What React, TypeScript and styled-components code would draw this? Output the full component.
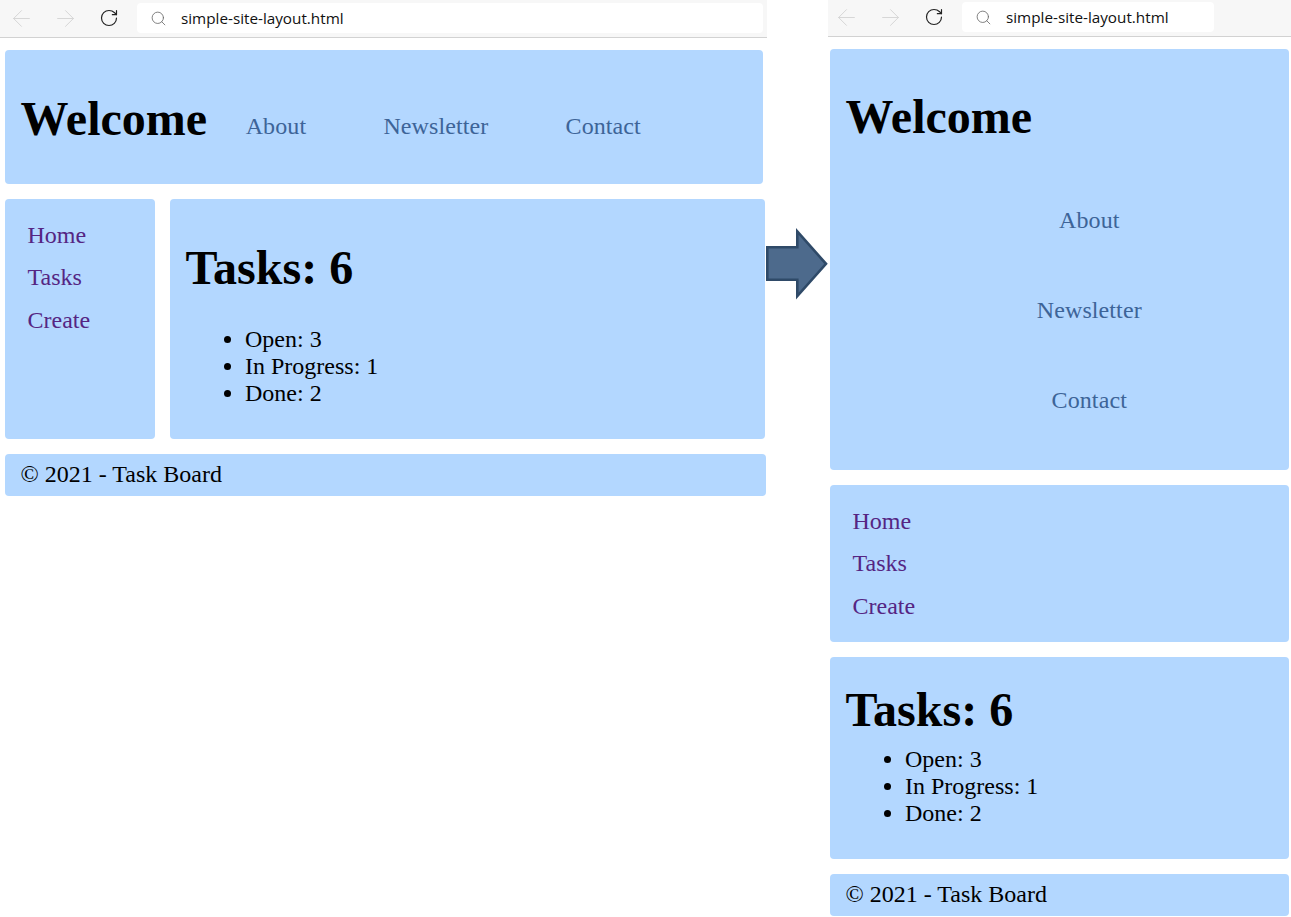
import React from "react";
import styled, { createGlobalStyle } from "styled-components";
import { ArrowLeft, ArrowRight, RotateCw, Search } from "lucide-react";

const Global = createGlobalStyle`
  html, body { margin: 0; padding: 0; background: #fff; }
  body { font-family: "Liberation Serif", "Times New Roman", serif; color: #000; }
`;

const Stage = styled.div`
  display: flex;
  width: 1291px;
  height: 917px;
  overflow: hidden;
`;

const Pane = styled.div<{ $w: number }>`
  width: ${(p) => p.$w}px;
  flex: none;
  display: flex;
  flex-direction: column;
`;

const Toolbar = styled.div<{ $h: number; $top: number }>`
  height: ${(p) => p.$h}px;
  flex: none;
  display: flex;
  align-items: flex-start;
  padding-top: ${(p) => p.$top}px;
  box-sizing: border-box;
  background: #f7f7f7;
  border-bottom: 1px solid #d2d2d2;
`;

const NavIcon = styled.span<{ $x: number; $c: string }>`
  width: 44px;
  height: 30px;
  flex: none;
  display: flex;
  align-items: center;
  justify-content: center;
  color: ${(p) => p.$c};
  &:first-child { margin-left: ${(p) => p.$x}px; }
`;

const Address = styled.div<{ $w: number; $ml: number }>`
  width: ${(p) => p.$w}px;
  margin-left: ${(p) => p.$ml}px;
  height: 30px;
  flex: none;
  display: flex;
  align-items: center;
  background: #fff;
  border-radius: 4px;
  color: #666;
  padding-left: 13px;
  box-sizing: border-box;
  gap: 14px;
`;

const Url = styled.span`
  font-family: "Open Sans", "Noto Sans", sans-serif;
  font-size: 15.25px;
  color: #111;
  white-space: nowrap;
`;

const Panel = styled.div`
  background: #b3d7ff;
  border-radius: 4px;
  box-sizing: border-box;
  flex: none;
`;

const Header = styled(Panel)<{ $w: number; $h: number; $stack?: boolean; $mt: number; $ml: number }>`
  width: ${(p) => p.$w}px;
  height: ${(p) => p.$h}px;
  margin: ${(p) => p.$mt}px 0 0 ${(p) => p.$ml}px;
  padding: ${(p) => (p.$stack ? "37px" : "3px")} 0 0 15.5px;
  display: flex;
  flex-direction: ${(p) => (p.$stack ? "column" : "row")};
  align-items: ${(p) => (p.$stack ? "stretch" : "center")};
`;

const Title = styled.h1`
  margin: 0;
  font-size: 48px;
  line-height: 62px;
  font-weight: 700;
`;

const TopLinks = styled.nav<{ $stack?: boolean }>`
  display: flex;
  flex-direction: ${(p) => (p.$stack ? "column" : "row")};
  padding: ${(p) => (p.$stack ? "27px 16px 0 60px" : "15px 0 0 0")};
  text-align: center;
`;

const TopLink = styled.a<{ $stack?: boolean }>`
  font-size: 24px;
  line-height: 28px;
  letter-spacing: 0.1px;
  color: #3d6498;
  text-decoration: none;
  padding: ${(p) => (p.$stack ? "31px 0" : "0 38.6px")};
`;

const Row = styled.div`
  display: flex;
  gap: 15px;
  margin: 15px 0 0 5px;
`;

const Side = styled(Panel)<{ $w: number; $h: number; $ml?: number; $mt?: number }>`
  width: ${(p) => p.$w}px;
  height: ${(p) => p.$h}px;
  margin: ${(p) => p.$mt ?? 0}px 0 0 ${(p) => p.$ml ?? 0}px;
  padding: 22px 0 0 22.5px;
  display: flex;
  flex-direction: column;
  gap: 14.3px;
`;

const SideLink = styled.a`
  font-size: 24px;
  line-height: 28px;
  color: #552583;
  text-decoration: none;
`;

const Main = styled(Panel)<{ $w: number; $h: number; $pt: number; $ml?: number; $mt?: number }>`
  width: ${(p) => p.$w}px;
  height: ${(p) => p.$h}px;
  margin: ${(p) => p.$mt ?? 0}px 0 0 ${(p) => p.$ml ?? 0}px;
  padding: ${(p) => p.$pt}px 0 0 15.5px;
`;

const Tasks = styled.ul<{ $mt: number }>`
  margin: ${(p) => p.$mt}px 0 0;
  padding: 0 0 0 59.5px;
  font-size: 24px;
  line-height: 27px;
`;

const Footer = styled(Panel)<{ $w: number; $mt: number; $ml: number }>`
  width: ${(p) => p.$w}px;
  height: 42px;
  margin: ${(p) => p.$mt}px 0 0 ${(p) => p.$ml}px;
  padding-left: 15.5px;
  font-size: 24px;
  line-height: 40px;
`;

const Gutter = styled.div`
  width: 61px;
  flex: none;
  padding-top: 228px;
`;

const ArrowShape = styled.svg`
  display: block;
  width: 63px;
  height: 72px;
  margin-left: -1px;
`;

const Chrome = ({ x, w, ml, h, top }: { x: number; w: number; ml: number; h: number; top: number }) => (
  <Toolbar $h={h} $top={top}>
    <NavIcon $x={x} $c="#d2d2d2"><ArrowLeft size={27} strokeWidth={0.8} /></NavIcon>
    <NavIcon $x={0} $c="#d2d2d2"><ArrowRight size={27} strokeWidth={0.8} /></NavIcon>
    <NavIcon $x={0} $c="#222"><RotateCw size={20} strokeWidth={1.4} /></NavIcon>
    <Address $w={w} $ml={ml}>
      <Search size={17} strokeWidth={1.15} />
      <Url>simple-site-layout.html</Url>
    </Address>
  </Toolbar>
);

export default function App() {
  return (
    <Stage>
      <Global />
      <Pane $w={767}>
        <Chrome x={-1} w={626} ml={6} h={38} top={3} />
        <Header $w={758} $h={134} $mt={12} $ml={5}>
          <Title>Welcome</Title>
          <TopLinks>
            <TopLink href="#">About</TopLink>
            <TopLink href="#">Newsletter</TopLink>
            <TopLink href="#">Contact</TopLink>
          </TopLinks>
        </Header>
        <Row>
          <Side $w={150} $h={240}>
            <SideLink href="#">Home</SideLink>
            <SideLink href="#">Tasks</SideLink>
            <SideLink href="#">Create</SideLink>
          </Side>
          <Main $w={595} $h={240} $pt={38}>
            <Title>Tasks: 6</Title>
            <Tasks $mt={27}>
              <li>Open: 3</li>
              <li>In Progress: 1</li>
              <li>Done: 2</li>
            </Tasks>
          </Main>
        </Row>
        <Footer $w={761} $mt={15} $ml={5}>© 2021 - Task Board</Footer>
      </Pane>
      <Gutter>
        <ArrowShape viewBox="-1 0 63 72">
          <path d="M0.300 19.300H30.300V3.500L59 35.800L30.300 68V51.700H0.300Z" fill="#4d6a8c" stroke="#2f4a68" strokeWidth="2.600" />
        </ArrowShape>
      </Gutter>
      <Pane $w={463}>
        <Chrome x={-4} w={252} ml={6} h={37} top={2} />
        <Header $w={459} $h={421} $mt={12} $ml={2} $stack>
          <Title>Welcome</Title>
          <TopLinks $stack>
            <TopLink $stack href="#">About</TopLink>
            <TopLink $stack href="#">Newsletter</TopLink>
            <TopLink $stack href="#">Contact</TopLink>
          </TopLinks>
        </Header>
        <Side $w={459} $h={157} $ml={2} $mt={15}>
          <SideLink href="#">Home</SideLink>
          <SideLink href="#">Tasks</SideLink>
          <SideLink href="#">Create</SideLink>
        </Side>
        <Main $w={459} $h={202} $pt={22} $ml={2} $mt={15}>
          <Title>Tasks: 6</Title>
          <Tasks $mt={5}>
            <li>Open: 3</li>
            <li>In Progress: 1</li>
            <li>Done: 2</li>
          </Tasks>
        </Main>
        <Footer $w={459} $mt={15} $ml={2}>© 2021 - Task Board</Footer>
      </Pane>
    </Stage>
  );
}
